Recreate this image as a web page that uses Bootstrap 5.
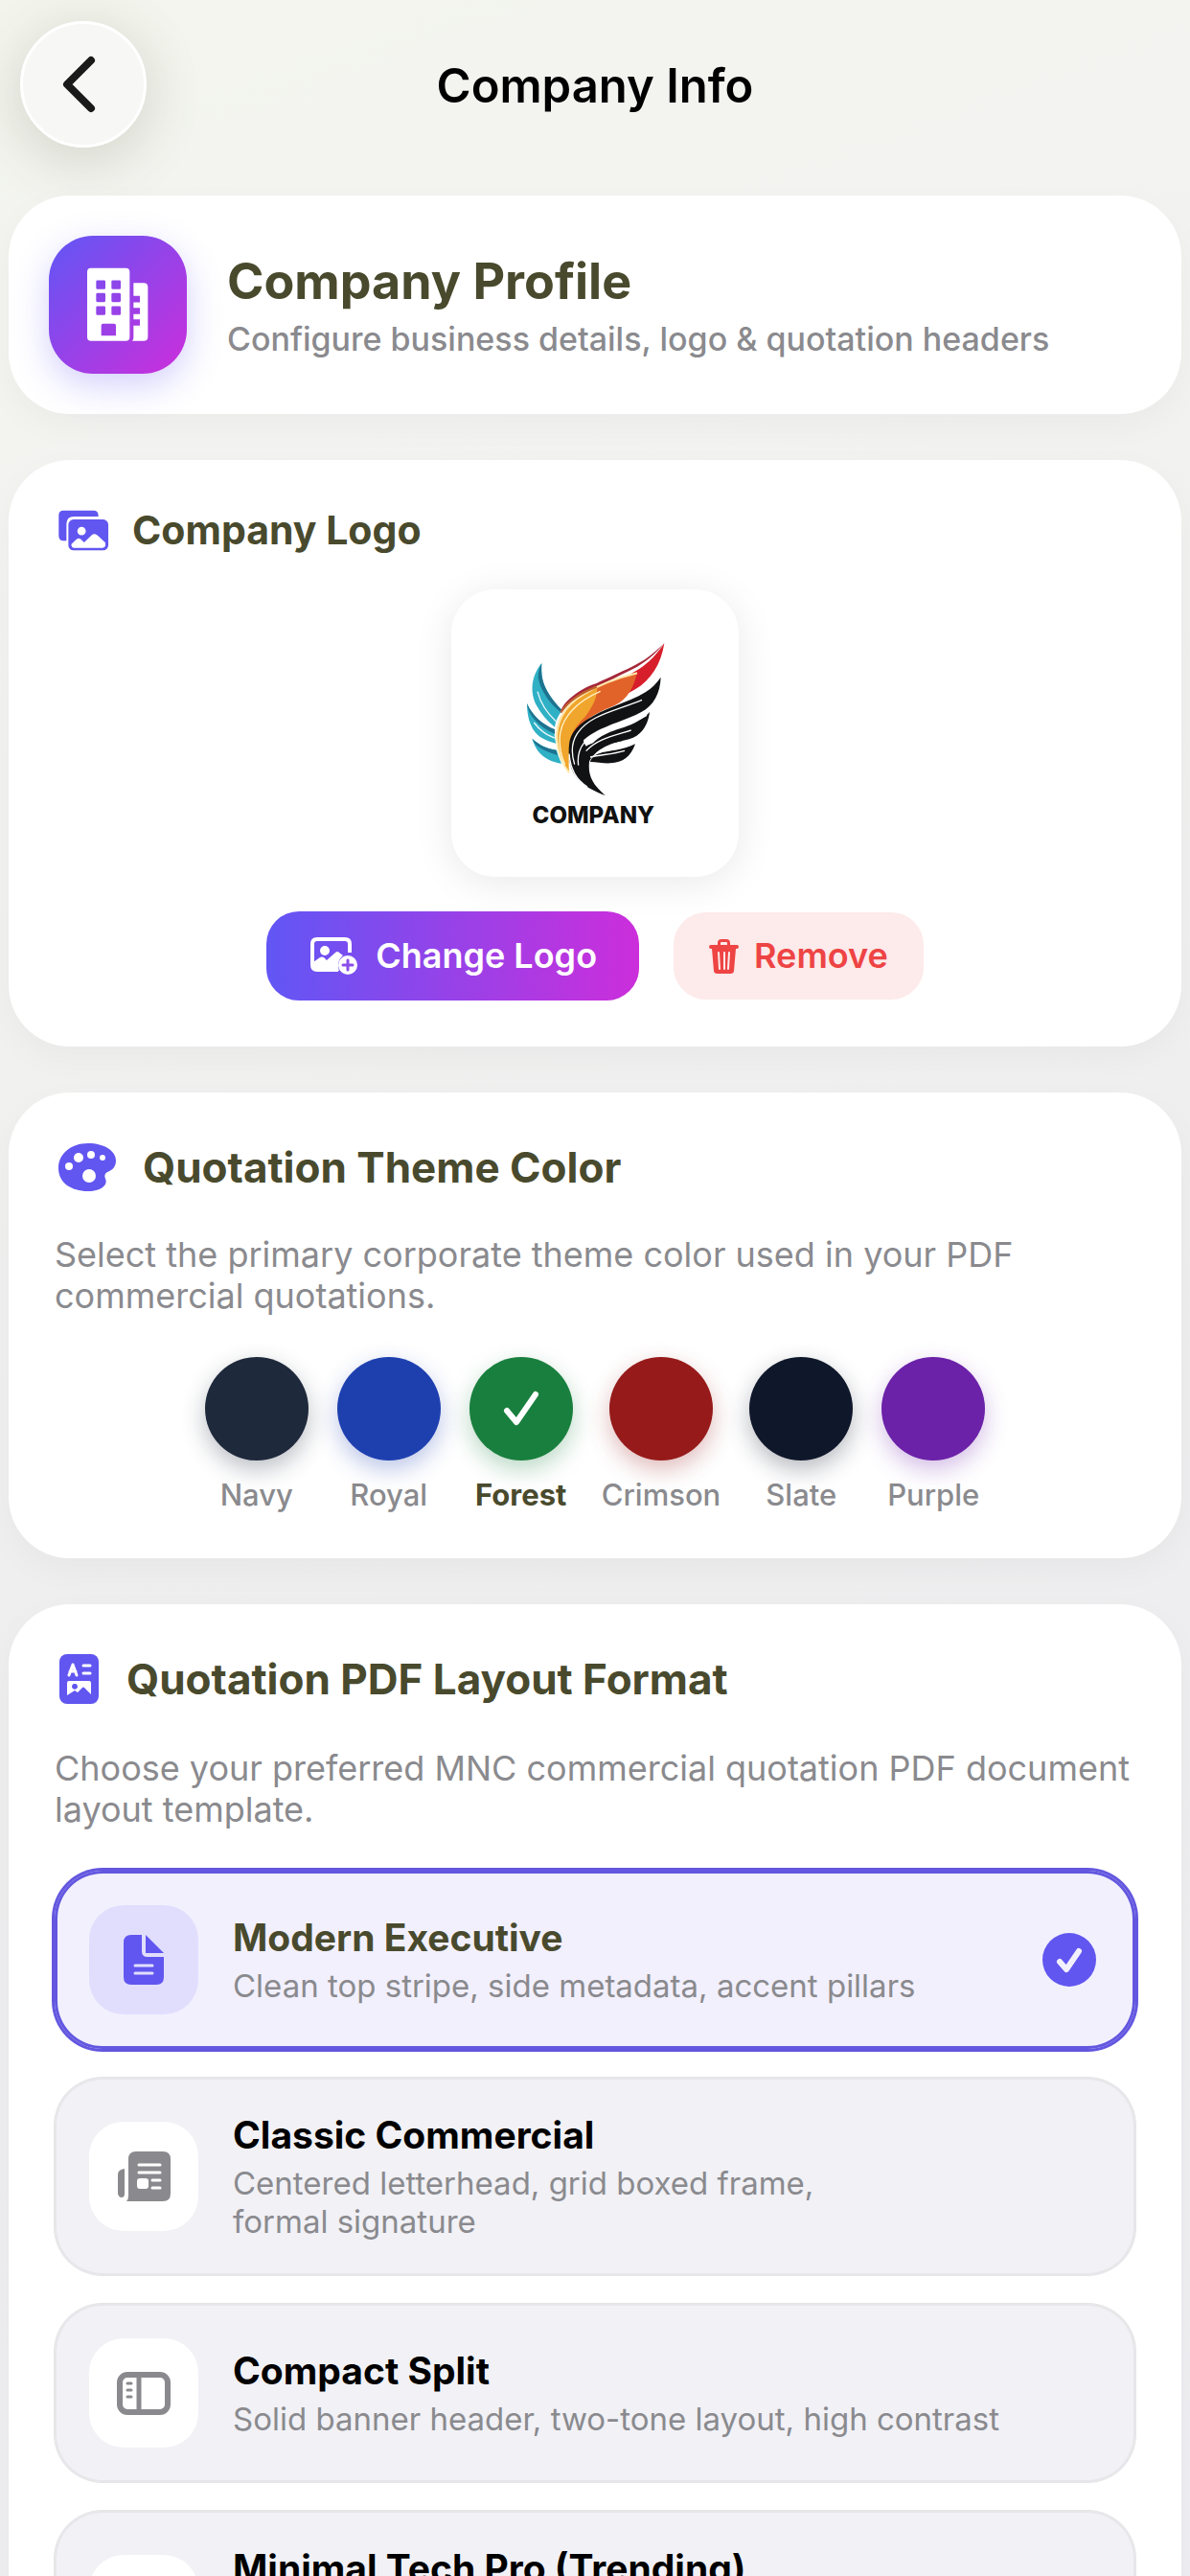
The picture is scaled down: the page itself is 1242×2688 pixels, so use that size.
<!DOCTYPE html>
<html lang="en">
<head>
<meta charset="utf-8">
<meta name="viewport" content="width=device-width, initial-scale=1">
<title>Company Info</title>
<link href="https://cdn.jsdelivr.net/npm/bootstrap@5.3.0/dist/css/bootstrap.min.css" rel="stylesheet">
<style>
:root { --indigo: #6156f0; --olive: #494a2d; --muted: #8a8a8e; }
body { font-family: Inter, "Liberation Sans", sans-serif; color: #000; background: linear-gradient(160deg, #f3f5ed 0%, #f3f3f1 18%, #eeeeef 60%, #efeff3 100%); }
svg { display: block; flex: none; }
.top-bar { height: 204px; padding: 22px 21px 0; }
.top-side { width: 132px; height: 132px; flex: none; }
.back-btn { background: #f7f7f5; border: 3px solid #fff; box-shadow: 0 12px 60px rgba(70, 75, 50, .2); }
.screen-title { font-size: 49px; line-height: 60px; font-weight: 600; padding-top: 38px; }
.stack { padding: 0 9px; gap: 48px; }
.panel { background: #fff; border-radius: 64px; box-shadow: 0 12px 36px rgba(0, 0, 0, .035); padding: 48px; }
.panel-profile { padding: 42px; gap: 42px; }
.profile-tile { width: 144px; height: 144px; border-radius: 46px; flex: none; background: linear-gradient(135deg, #6156f5, #cc2edb); box-shadow: 0 12px 36px rgba(97, 86, 245, .28); }
.profile-title { font-size: 52px; line-height: 65px; font-weight: 700; color: var(--olive); margin: 0 0 6px; }
.profile-sub { font-size: 34px; line-height: 43px; font-weight: 500; color: var(--muted); }
.panel-title { font-size: 44px; line-height: 51px; font-weight: 700; color: var(--olive); margin: 0; }
.panel-title-sm { font-size: 41px; }
.head-tall { height: 60px; }
.head-row { gap: 28px; }
.note { font-size: 36px; line-height: 43px; color: var(--muted); margin: 42px 0; }
.logo-box { width: 300px; height: 300px; border-radius: 46px; background: #fff; box-shadow: 0 6px 42px rgba(0, 0, 0, .09); margin: 36px 0; }
.action-row { gap: 36px; }
.action { font-size: 36px; font-weight: 600; border: 0; border-radius: 34px; line-height: 43px; }
.action-change { height: 93px; padding: 0 44px 0 46px; gap: 18px; color: #fff; background: linear-gradient(90deg, #6156f5, #cc2edb); }
.action-remove { height: 91px; padding: 0 37px; gap: 16px; color: #ee4444; background: #fdeaea; }
.swatches { gap: 30px; }
.swatch { min-width: 108px; gap: 18px; font-size: 31px; line-height: 36px; font-weight: 500; color: var(--muted); }
.swatch.chosen { color: var(--olive); font-weight: 700; }
.dot { width: 108px; height: 108px; border-radius: 50%; }
.navy { background: #1e293b; box-shadow: 0 9px 24px rgba(30, 41, 59, .3); }
.royal { background: #1e40af; box-shadow: 0 9px 24px rgba(30, 64, 175, .3); }
.forest { background: #197f3e; box-shadow: 0 9px 24px rgba(25, 127, 62, .3); }
.crimson { background: #961a1a; box-shadow: 0 9px 24px rgba(150, 26, 26, .3); }
.slate { background: #0f172a; box-shadow: 0 9px 24px rgba(15, 23, 42, .3); }
.purple { background: #6b21a8; box-shadow: 0 9px 24px rgba(107, 33, 168, .3); }
.options { gap: 30px; }
.option { padding: 36px 41px 36px 36px; gap: 36px; border: 0; border-radius: 50px; background: #f1f1f6; box-shadow: 0 0 0 1px #e5e5e8, inset 0 0 0 2px #e7e7ea; }
.option.chosen { background: #f2f0fd; box-shadow: 0 0 0 3px #6357e0, inset 0 0 0 3px #6357e0; }
.option-cut { min-height: 206px; }
.tile { width: 114px; height: 114px; border-radius: 36px; background: #fff; flex: none; }
.chosen .tile { background: #e1defd; }
.option-title { font-size: 39px; line-height: 48px; font-weight: 700; margin-bottom: 6px; }
.chosen .option-title { color: var(--olive); }
.option-text { font-size: 33px; line-height: 40px; color: var(--muted); }
</style>
</head>
<body>
<div class="vh-100 overflow-hidden">
  <header class="top-bar d-flex align-items-start justify-content-between">
    <button class="top-side back-btn rounded-circle p-0 d-flex align-items-center justify-content-center" type="button" aria-label="Back">
      <svg width="44" height="64" viewBox="0 0 44 64" fill="none" stroke="#1a1a1a" stroke-width="8" stroke-linecap="round" stroke-linejoin="round"><path d="M30 7 5 32 30 57"/></svg>
    </button>
    <h1 class="screen-title m-0">Company Info</h1>
    <div class="top-side"></div>
  </header>

  <main class="stack d-flex flex-column">
    <section class="panel panel-profile d-flex align-items-center">
      <div class="profile-tile d-flex align-items-center justify-content-center">
        <svg width="64" height="78" viewBox="183 179 192 231" fill="#fff"><path fill-rule="evenodd" d="M194 180h110q12 0 12 12v204q0 12-12 12H195q-12 0-12-12V192q0-12 11-12ZM215 218q-4 0-4 4v20q0 4 4 4h21q4 0 4-4v-20q0-4-4-4ZM263 218q-4 0-4 4v20q0 4 4 4h21q4 0 4-4v-20q0-4-4-4ZM215 258q-4 0-4 4v20q0 4 4 4h21q4 0 4-4v-20q0-4-4-4ZM263 258q-4 0-4 4v20q0 4 4 4h21q4 0 4-4v-20q0-4-4-4ZM215 299q-4 0-4 4v20q0 4 4 4h21q4 0 4-4v-20q0-4-4-4ZM263 299q-4 0-4 4v20q0 4 4 4h21q4 0 4-4v-20q0-4-4-4ZM233 354q-6 0-6 6v31h46v-31q0-6-6-6Z"/><path d="M328 226h32q13 0 13 13v156q0 13-13 13h-36q5-6 4-14v-34h20v-20h-20v-16h20v-20h-20v-17h20v-20h-20Z"/></svg>
      </div>
      <div>
        <h2 class="profile-title">Company Profile</h2>
        <div class="profile-sub">Configure business details, logo &amp; quotation headers</div>
      </div>
    </section>

    <section class="panel d-flex flex-column align-items-center">
      <div class="d-flex align-items-center align-self-stretch gap-4 px-1">
        <svg width="53" height="43" viewBox="186 153 156 128" fill="#6156f0"><path d="M201 155h93q15 0 15 16v3h-76q-22 0-23 22v53h-9q-15 0-15-15v-64q0-15 15-15Z"/><rect x="216" y="183" width="124" height="96" rx="16"/><circle cx="257" cy="219" r="13" fill="#fff"/><path fill="#fff" d="M225 260q10-10 17-16 6-5 12 0l11 10 23-22q8-7 18 0l25 23v7q0 9-9 9h-88q-9 0-9-11Z"/></svg>
        <h2 class="panel-title panel-title-sm">Company Logo</h2>
      </div>
      <div class="logo-box">
        <svg width="300" height="300" viewBox="93 75 900 900" role="img" aria-label="Company logo">
          <path fill="#2fb0c5" d="M376 306C344 345 337 397 361 440c12 22 31 45 56 66 2-16 9-34 22-50-27-28-54-66-61-103-3-17-3-32-2-47Z"/>
          <path fill="#1d7390" d="M376 306c-7 14-11 30-11 46 8 40 34 79 71 108l4-7c-29-30-55-65-62-100-3-17-3-32-2-47Z"/>
          <path fill="#2fb0c5" d="M330 432c0 50 16 92 48 109 13 7 28 13 43 16-4-13-6-27-5-39-39-16-70-48-86-86Z"/>
          <path fill="#1d7390" d="M330 432c2 13 6 26 12 35 16 25 42 46 75 60v-14c-39-15-71-45-87-81Z"/>
          <path fill="#2fb0c5" d="M346 542c9 31 27 54 52 66 13 6 26 10 40 12-6-14-12-28-15-42-29-4-57-17-77-36Z"/>
          <path fill="#1d7390" d="M346 542c5 11 12 20 20 26 17 12 37 20 60 26l-5-16c-29-4-55-17-75-36Z"/>
          <path fill="none" stroke="#e6f7fa" stroke-width="4" d="M363 395c10 38 30 68 58 93M352 492c18 24 40 40 64 48"/>
          <path fill="#a5283a" d="M760 243c-28 36-60 61-99 82-48 25-103 46-145 83-35 5-61 22-79 54-7-20 49-75 111-93 46-22 124-55 156-78 22-16 40-32 56-48Z"/>
          <path fill="#d71f2b" d="M760 243c-10 66-42 116-91 145-64 38-133 61-175 109-20 22-32 46-35 70-10-62 15-130 78-165 45-25 97-48 143-77 31-20 58-48 80-82Z"/>
          <path fill="#f0a52c" d="M675 335c-58 15-114 34-169 68-60 34-88 86-84 141 3 38 18 73 40 105-5-70 5-122 56-165 52-44 121-42 157-149Z"/>
          <path fill="#e2632a" d="M675 335c-45 12-85 26-126 46 4 25-12 61-39 95-20 18-32 36-41 58 35-51 79-73 136-96 38-18 58-52 70-103Z"/>
          <path fill="none" stroke="#ffe9ad" stroke-width="6" d="M675 337c-60 15-114 33-167 66-62 36-88 90-84 146 3 37 16 72 38 100"/>
          <path fill="none" stroke="#c0602a" stroke-width="7" d="M436 460c26-38 60-59 112-80"/>
          <path fill="none" stroke="#fff1c4" stroke-width="4" d="M560 394c-75 32-122 82-127 141-2 31 3 60 16 88"/>
          <path fill="#111214" d="M749 350c-2 50-22 88-61 109-57 31-133 45-179 86-27 24-29 62-12 101-45-59-37-121 16-159 58-42 129-54 188-90 20-13 36-29 48-47Z"/>
          <path fill="#111214" d="M714 459c-5 43-27 74-64 85-49 14-99 16-131 43 12-45 67-66 114-80 33-11 61-26 81-48Z"/>
          <path fill="#111214" d="M669 559c-13 39-39 59-78 60-22 1-43-4-63-4 8-29 48-32 79-37 24-4 45-10 62-19Z"/>
          <path fill="#111214" d="M462 560c-6 66 13 111 65 138 16 8 31 16 48 22-42-38-54-62-50-106 12-24 43-53 105-65-56-2-93 3-115 17-19-29-12-64 14-90-42 23-64 51-67 84Z"/>
          <path fill="none" stroke="#fff" stroke-width="4" d="M690 421c-80 34-164 46-203 106-20 31-17 67-8 96M705 469c-69 41-160 40-197 87-16 21-20 46-17 70M656 516c-53 17-105 26-141 65M636 580c-37 11-72 12-108 20M462 590c4 50 23 83 57 103"/>
          <text x="538" y="806" text-anchor="middle" font-family="Inter, sans-serif" font-size="72" font-weight="800" fill="#111">COMPANY</text>
        </svg>
      </div>
      <div class="action-row d-flex align-items-center justify-content-center">
        <button type="button" class="action action-change d-flex align-items-center">
          <svg width="50" height="40" viewBox="0 0 50 40"><path fill="none" stroke="#fff" stroke-width="4" d="M29 34H7q-5 0-5-5V7q0-5 5-5h29q5 0 5 5v9"/><circle cx="15" cy="14" r="5" fill="#fff"/><path fill="#fff" d="M3 26l7-5q2-1 4 0l3 3 9-8q2-2 4 0l4 3q-6 5-5 13l1 3H7q-4 0-4-4Z"/><circle cx="39" cy="29" r="10" fill="#fff"/><path stroke="#8b4eea" stroke-width="3" stroke-linecap="round" d="M34 29h10M39 24v10"/></svg>
          Change Logo
        </button>
        <button type="button" class="action action-remove d-flex align-items-center">
          <svg width="31" height="38" viewBox="0 0 31 38" fill="#ee4444"><path d="M9 7V5q0-4 4-4h5q4 0 4 4v2h7q2 0 2 2t-2 2H2q-2 0-2-2t2-2Zm3 0h7V5q0-1-1-1h-5q-1 0-1 1Z" fill-rule="evenodd"/><path d="M3 11h25l-2 23q0 3-4 3H9q-4 0-4-3Z"/><path stroke="#fdeaea" stroke-width="2" stroke-linecap="round" d="M10 15l1 17M16 15v17M21 15l-1 17"/></svg>
          Remove
        </button>
      </div>
    </section>

    <section class="panel">
      <div class="head-tall head-row d-flex align-items-center px-1">
        <svg width="60" height="50" viewBox="0 0 60 50"><path fill="#6156f0" d="M31 0C48 0 60 8 60 18c0 7-4 10-9 12-3 2-3 4-2 7 3 6-4 13-18 13C13 50 0 41 0 26 0 11 13 0 31 0Z"/><g fill="#fff"><ellipse cx="11" cy="24" rx="4" ry="4"/><circle cx="21" cy="15" r="5"/><circle cx="34" cy="12" r="4"/><circle cx="46" cy="15" r="3"/><circle cx="32" cy="34" r="7"/></g></svg>
        <h2 class="panel-title">Quotation Theme Color</h2>
      </div>
      <p class="note mt-0 pt-4 mt-3">Select the primary corporate theme color used in your PDF commercial quotations.</p>
      <div class="swatches d-flex justify-content-center">
        <button type="button" class="swatch btn p-0 border-0 d-flex flex-column align-items-center"><span class="dot navy"></span>Navy</button>
        <button type="button" class="swatch btn p-0 border-0 d-flex flex-column align-items-center"><span class="dot royal"></span>Royal</button>
        <button type="button" class="swatch chosen btn p-0 border-0 d-flex flex-column align-items-center"><span class="dot forest d-flex align-items-center justify-content-center"><svg width="38" height="38" viewBox="0 0 38 38" fill="none" stroke="#fff" stroke-width="6" stroke-linecap="round" stroke-linejoin="round"><path d="M4 21 14 33 34 4"/></svg></span>Forest</button>
        <button type="button" class="swatch btn p-0 border-0 d-flex flex-column align-items-center"><span class="dot crimson"></span>Crimson</button>
        <button type="button" class="swatch btn p-0 border-0 d-flex flex-column align-items-center"><span class="dot slate"></span>Slate</button>
        <button type="button" class="swatch btn p-0 border-0 d-flex flex-column align-items-center"><span class="dot purple"></span>Purple</button>
      </div>
    </section>

    <section class="panel">
      <div class="head-tall head-row d-flex align-items-center px-1">
        <svg width="43" height="52" viewBox="0 0 43 52"><rect x="1" width="41" height="52" rx="8" fill="#6156f0"/><g fill="none" stroke="#fff" stroke-width="3" stroke-linecap="round" stroke-linejoin="round"><path d="m11 22 4-11 4 11M12 18h6"/><path d="M26 12h7M26 20h7"/></g><path fill="#fff" fill-rule="evenodd" d="M11 28h21q2 0 2 2v12l-7-7q-1-1-2 0l-5 5-3-2-8 5V30q0-2 2-2Zm5 3a3 3 0 1 0 2 0Z"/></svg>
        <h2 class="panel-title">Quotation PDF Layout Format</h2>
      </div>
      <p class="note">Choose your preferred MNC commercial quotation PDF document layout template.</p>
      <div class="options d-flex flex-column">
        <button type="button" class="option chosen d-flex align-items-center text-start">
          <span class="tile d-flex align-items-center justify-content-center"><svg width="42" height="52" viewBox="0 0 42 52" fill="#6156f0"><path d="M8 0h11v17q0 6 6 6h17v21q0 8-8 8H8q-8 0-8-8V8q0-8 8-8Z"/><path d="M23 0l19 19H23Z"/><path stroke="#e1defd" stroke-width="3" stroke-linecap="round" d="M12 32h18M12 40h18"/></svg></span>
          <span class="flex-grow-1"><span class="option-title d-block">Modern Executive</span><span class="option-text d-block">Clean top stripe, side metadata, accent pillars</span></span>
          <svg width="56" height="56" viewBox="0 0 56 56"><circle cx="28" cy="28" r="28" fill="#6156f0"/><path fill="none" stroke="#f2f0fd" stroke-width="6" stroke-linecap="round" stroke-linejoin="round" d="m18 30 7 8 13-19"/></svg>
        </button>
        <button type="button" class="option d-flex align-items-center text-start">
          <span class="tile d-flex align-items-center justify-content-center"><svg width="55" height="52" viewBox="0 0 55 52" fill="#8a8a8e"><path d="M19 0h28q8 0 8 8v36q0 8-8 8H9q2-2 2-6V8q0-8 8-8ZM7 18v26q0 4-3 4t-4-4V24q0-5 7-6Z"/><g stroke="#fff" stroke-width="3" stroke-linecap="round"><path d="M22 14h22M22 22h22M36 30h8M36 38h8"/></g><rect x="20" y="28" width="12" height="11" rx="3" fill="#fff"/></svg></span>
          <span><span class="option-title d-block">Classic Commercial</span><span class="option-text d-block">Centered letterhead, grid boxed frame,<br>formal signature</span></span>
        </button>
        <button type="button" class="option d-flex align-items-center text-start">
          <span class="tile d-flex align-items-center justify-content-center"><svg width="56" height="45" viewBox="0 0 56 45" fill="none" stroke="#8a8a8e"><rect x="3" y="3" width="50" height="39" rx="8" stroke-width="6"/><path stroke-width="5" d="M23 3v39"/><path stroke-width="3" stroke-linecap="round" d="M11 12h4M11 19h4M11 26h4"/></svg></span>
          <span><span class="option-title d-block">Compact Split</span><span class="option-text d-block">Solid banner header, two-tone layout, high contrast</span></span>
        </button>
        <button type="button" class="option option-cut d-flex align-items-start text-start">
          <span class="tile align-self-center"></span>
          <span class="option-title">Minimal Tech Pro (Trending)</span>
        </button>
      </div>
    </section>
  </main>
</div>
<script src="https://cdn.jsdelivr.net/npm/bootstrap@5.3.0/dist/js/bootstrap.bundle.min.js"></script>
</body>
</html>
